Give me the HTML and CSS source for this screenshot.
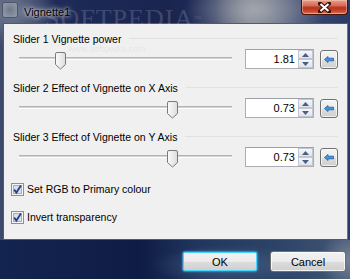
FILE: index.html
```html
<!DOCTYPE html>
<html>
<head>
<meta charset="utf-8">
<link rel="stylesheet" href="styles.css">
</head>
<body>
<div class="window">
  <div class="titlebar">
    <div class="app-icon"></div>
    <span class="title">Vignette1</span>
    <div class="close">
      <svg width="13" height="11" viewBox="0 0 13 11"><path d="M2 1.5 L11 9.5 M11 1.5 L2 9.5" stroke="#3a0d05" stroke-width="4" stroke-linecap="square"/><path d="M2.5 2 L10.5 9 M10.5 2 L2.5 9" stroke="#fff" stroke-width="2.2"/></svg>
    </div>
  </div>

  <div class="client">
    <section class="group">
      <div class="group-head"><span class="label">Slider 1 Vignette power</span><span class="rule"></span></div>
      <div class="control-row">
        <div class="slider"><div class="track"></div><div class="thumb" style="left:42px"><svg width="11" height="18" viewBox="0 0 11 18"><defs><linearGradient id="tg1" x1="0" y1="0" x2="1" y2="0"><stop offset="0" stop-color="#fbfbfb"/><stop offset="1" stop-color="#dcdcdc"/></linearGradient></defs><path d="M0.5 2 Q0.5 0.5 2 0.5 H9 Q10.5 0.5 10.5 2 V12.5 L5.5 17 L0.5 12.5 Z" fill="url(#tg1)" stroke="#7a7a7a"/></svg></div></div>
        <div class="spin-box"><span class="value">1.81</span><div class="spin"><span class="spin-btn"><svg width="7" height="4" viewBox="0 0 7 4"><path d="M0 4 L3.5 0 L7 4 Z" fill="#4a5e83"/></svg></span><span class="spin-btn"><svg width="7" height="4" viewBox="0 0 7 4"><path d="M0 0 L3.5 4 L7 0 Z" fill="#4a5e83"/></svg></span></div></div>
        <button class="reset"><svg width="10" height="7" viewBox="0 0 10 7"><path d="M0.5 3.5 L4 0.5 V2.2 H9.5 V4.8 H4 V6.5 Z" fill="#3d9be6" stroke="#1f5c9c" stroke-width="0.8" stroke-linejoin="round"/></svg></button>
      </div>
    </section>

    <section class="group">
      <div class="group-head"><span class="label">Slider 2 Effect of Vignette on X Axis</span><span class="rule"></span></div>
      <div class="control-row">
        <div class="slider"><div class="track"></div><div class="thumb" style="left:154px"><svg width="11" height="18" viewBox="0 0 11 18"><path d="M0.5 2 Q0.5 0.5 2 0.5 H9 Q10.5 0.5 10.5 2 V12.5 L5.5 17 L0.5 12.5 Z" fill="url(#tg1)" stroke="#7a7a7a"/></svg></div></div>
        <div class="spin-box"><span class="value">0.73</span><div class="spin"><span class="spin-btn"><svg width="7" height="4" viewBox="0 0 7 4"><path d="M0 4 L3.5 0 L7 4 Z" fill="#4a5e83"/></svg></span><span class="spin-btn"><svg width="7" height="4" viewBox="0 0 7 4"><path d="M0 0 L3.5 4 L7 0 Z" fill="#4a5e83"/></svg></span></div></div>
        <button class="reset"><svg width="10" height="7" viewBox="0 0 10 7"><path d="M0.5 3.5 L4 0.5 V2.2 H9.5 V4.8 H4 V6.5 Z" fill="#3d9be6" stroke="#1f5c9c" stroke-width="0.8" stroke-linejoin="round"/></svg></button>
      </div>
    </section>

    <section class="group">
      <div class="group-head"><span class="label">Slider 3 Effect of Vignette on Y Axis</span><span class="rule"></span></div>
      <div class="control-row">
        <div class="slider"><div class="track"></div><div class="thumb" style="left:154px"><svg width="11" height="18" viewBox="0 0 11 18"><path d="M0.5 2 Q0.5 0.5 2 0.5 H9 Q10.5 0.5 10.5 2 V12.5 L5.5 17 L0.5 12.5 Z" fill="url(#tg1)" stroke="#7a7a7a"/></svg></div></div>
        <div class="spin-box"><span class="value">0.73</span><div class="spin"><span class="spin-btn"><svg width="7" height="4" viewBox="0 0 7 4"><path d="M0 4 L3.5 0 L7 4 Z" fill="#4a5e83"/></svg></span><span class="spin-btn"><svg width="7" height="4" viewBox="0 0 7 4"><path d="M0 0 L3.5 4 L7 0 Z" fill="#4a5e83"/></svg></span></div></div>
        <button class="reset"><svg width="10" height="7" viewBox="0 0 10 7"><path d="M0.5 3.5 L4 0.5 V2.2 H9.5 V4.8 H4 V6.5 Z" fill="#3d9be6" stroke="#1f5c9c" stroke-width="0.8" stroke-linejoin="round"/></svg></button>
      </div>
    </section>

    <div class="checks">
      <label class="check"><span class="box"><svg width="13" height="13" viewBox="0 0 13 13"><rect x="0.5" y="0.5" width="12" height="12" fill="#f4f4f4" stroke="#8e8f8f"/><rect x="2.5" y="2.5" width="8" height="8" fill="#d9dde4" stroke="#a9aeb8"/><path d="M3.2 6.6 L5.4 9.6 L9.9 2.6" fill="none" stroke="#263f8f" stroke-width="1.8"/></svg></span>Set RGB to Primary colour</label>
      <label class="check"><span class="box"><svg width="13" height="13" viewBox="0 0 13 13"><rect x="0.5" y="0.5" width="12" height="12" fill="#f4f4f4" stroke="#8e8f8f"/><rect x="2.5" y="2.5" width="8" height="8" fill="#d9dde4" stroke="#a9aeb8"/><path d="M3.2 6.6 L5.4 9.6 L9.9 2.6" fill="none" stroke="#263f8f" stroke-width="1.8"/></svg></span>Invert transparency</label>
    </div>
  </div>

  <div class="footer">
    <button class="btn default">OK</button>
    <button class="btn">Cancel</button>
  </div>

  <div class="watermark">SOFTPEDIA<sup>™</sup></div>
  <div class="watermark-url">www.softpedia.com</div>
</div>
</body>
</html>
```

FILE: styles.css
```css
* { box-sizing: border-box; }
html, body { margin: 0; padding: 0; }
body {
  width: 350px;
  height: 279px;
  overflow: hidden;
  font-family: "Liberation Sans", Arial, sans-serif;
  font-size: 10.5px;
  color: #000;
  background: #14224b;
}
.window {
  position: relative;
  width: 350px;
  height: 279px;
  display: flex;
  flex-direction: column;
  background:
    radial-gradient(ellipse 70px 40px at 255px 10px, rgba(165,168,175,0.95), rgba(165,168,175,0) 100%),
    radial-gradient(ellipse 45px 35px at 12px 12px, rgba(120,130,150,0.9), rgba(120,130,150,0) 100%),
    linear-gradient(90deg, #3e4a6c 0, #1e2a57 60px, #19244f 170px, #25325c 215px, #6c7384 250px, #3c4a70 295px, #2a3a66 350px);
}

/* title bar */
.titlebar {
  height: 23px;
  flex: none;
  display: flex;
  align-items: flex-start;
  position: relative;
}
.app-icon {
  width: 16px;
  height: 16px;
  margin: 2px 0 0 2px;
  border-radius: 3px;
  border: 1px solid #4d5566;
  background: radial-gradient(circle at 50% 50%, #6f7789 0, #8a93a4 70%, #9aa2b0 100%);
}
.title {
  margin: 6px 0 0 6px;
  font-size: 11px;
  line-height: 13px;
  color: #000;
  text-shadow: 0 0 6px rgba(255,255,255,0.9), 0 0 3px rgba(255,255,255,0.8);
  position: relative;
  z-index: 1;
}
.close {
  margin-left: auto;
  margin-right: 2px;
  width: 47px;
  height: 15px;
  border: 1px solid #47140c;
  border-top: none;
  border-radius: 0 0 4px 4px;
  background: linear-gradient(#e7a08e 0, #d46b52 40%, #b5321c 55%, #c9472c 80%, #e07a55 100%);
  box-shadow: inset 0 0 0 1px rgba(255,210,200,0.45);
  display: flex;
  align-items: center;
  justify-content: center;
}

/* client */
.client {
  height: 217px;
  flex: none;
  margin: 0 2px 0 3px;
  border: 1px solid #4f5b74;
  border-right-color: #6b7690;
  background: #f0f0f0;
  padding: 9px 9px 0 9px;
  display: flex;
  flex-direction: column;
}
.group + .group { margin-top: 13px; }
.group-head {
  height: 13px;
  display: flex;
  align-items: flex-start;
}
.label {
  line-height: 13px;
  white-space: nowrap;
}
.rule {
  flex: 1;
  height: 1px;
  margin: 5px 0 0 8px;
  background: #dde2e7;
}
.control-row {
  margin-top: 3px;
  height: 20px;
  display: flex;
  align-items: flex-start;
}
.slider {
  position: relative;
  width: 225px;
  height: 20px;
  flex: none;
}
.track {
  margin: 8px 6px 0 6px;
  height: 3px;
  background: linear-gradient(#b4b4b4 0 1px, #d2d2d2 1px 2px, #ffffff 2px);
}
.thumb {
  position: absolute;
  top: 3px;
  width: 11px;
  height: 18px;
}
.thumb svg { display: block; }
.spin-box {
  margin-left: 7px;
  width: 69px;
  height: 20px;
  flex: none;
  border: 1px solid #abadb3;
  border-top-color: #9ea1a8;
  background: #fff;
  display: flex;
  align-items: stretch;
}
.value {
  flex: 1;
  text-align: right;
  padding-right: 3px;
  line-height: 18px;
  font-size: 11px;
}
.spin {
  width: 15px;
  display: flex;
  flex-direction: column;
}
.spin-btn {
  flex: 1;
  border: 1px solid #c1c6d0;
  background: linear-gradient(#f6f7f9, #dfe3ea);
  display: flex;
  align-items: center;
  justify-content: center;
}
.spin-btn svg { display: block; }
.reset {
  margin: 1px 0 0 6px;
  width: 18px;
  height: 19px;
  flex: none;
  padding: 0;
  border: 1px solid #707070;
  border-radius: 3px;
  background: linear-gradient(#f3f3f3 0, #ebebeb 50%, #dddddd 51%, #cfcfcf 100%);
  box-shadow: inset 0 0 0 1px rgba(255,255,255,0.7);
  display: flex;
  align-items: center;
  justify-content: center;
}
.reset svg { display: block; }

/* checkboxes */
.checks {
  margin-top: 16px;
  display: flex;
  flex-direction: column;
  gap: 15px;
}
.check {
  display: flex;
  align-items: center;
  height: 13px;
  margin-left: -2px;
  line-height: 13px;
  white-space: nowrap;
}
.box {
  width: 13px;
  height: 13px;
  margin-right: 3px;
  flex: none;
}
.box svg { display: block; }

/* footer */
.footer {
  flex: 1;
  display: flex;
  justify-content: flex-end;
  align-items: flex-start;
  gap: 12px;
  padding: 11px 4px 0 0;
  background:
    radial-gradient(ellipse 80px 20px at 230px 25px, rgba(80,110,150,0.55), rgba(80,110,150,0) 100%),
    radial-gradient(ellipse 30px 30px at 350px 20px, rgba(140,150,165,0.7), rgba(140,150,165,0) 100%),
    linear-gradient(90deg, #142450 0, #0f1c45 140px, #22375f 200px, #2d4468 280px, #445774 350px);
}
.btn {
  width: 76px;
  height: 21px;
  padding: 0;
  font-family: "Liberation Sans", Arial, sans-serif;
  font-size: 11px;
  color: #000;
  border: 1px solid #707070;
  border-radius: 3px;
  background: linear-gradient(#f2f2f2 0, #ebebeb 50%, #dddddd 51%, #cfcfcf 100%);
  box-shadow: inset 0 0 0 1px rgba(255,255,255,0.75);
}
.btn.default {
  border-color: #3c7fb1;
  box-shadow: inset 0 0 0 1px #48d4fb, 0 0 2px rgba(60,180,240,0.6);
}

/* watermark overlay */
.watermark {
  position: absolute;
  left: 45px;
  top: 6px;
  font-family: "Liberation Serif", serif;
  font-size: 26px;
  letter-spacing: 1px;
  line-height: 26px;
  color: rgba(255,255,255,0.18);
  pointer-events: none;
}
.watermark sup { font-size: 7px; vertical-align: top; }
.watermark-url {
  position: absolute;
  left: 68px;
  top: 45px;
  font-size: 9px;
  line-height: 9px;
  color: rgba(150,150,150,0.15);
  pointer-events: none;
}
```
